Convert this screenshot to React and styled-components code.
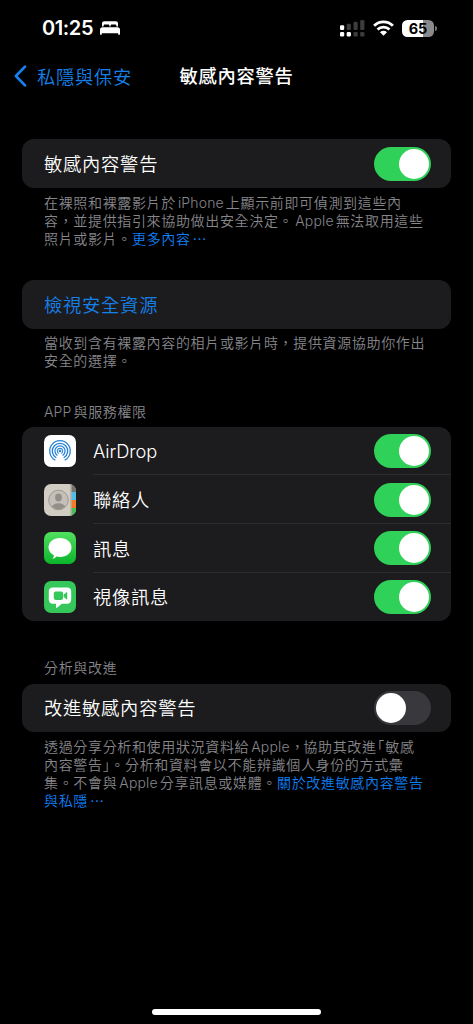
import React, { useState } from 'react'
import styled, { createGlobalStyle } from 'styled-components';


function StatusBar() {
    return (
        <Status>
            <Clock>
                01:25
                <svg width="20" height="14" viewBox="0 0 20 14" fill="#fff">
                    <path d="M2 5.4V2.6C2 1 2.9.2 4.4.2h11.2C17.1.2 18 1 18 2.6v2.8h-1.6v-.6c0-.9-.5-1.4-1.4-1.4h-3c-.9 0-1.4.5-1.4 1.4v.6H9.4v-.6c0-.9-.5-1.4-1.4-1.4H5c-.9 0-1.4.5-1.4 1.4v.6z" />
                    <path d="M0 9c0-1.7.9-2.7 2.5-2.7h15C19.1 6.3 20 7.3 20 9v4.2c0 .4-.2.6-.6.6h-.6c-.4 0-.6-.2-.6-.6v-1H1.8v1c0 .4-.2.6-.6.6H.6c-.4 0-.6-.2-.6-.6z" />
                </svg>
            </Clock>
            <Indicators>
                <svg width="25" height="17" viewBox="0 0 25 17">
                    <g fill="#fff">
                        <rect x="0" y="5.3" width="4.2" height="4.7" rx="1.2" />
                        <rect x="0" y="12" width="4.2" height="4.5" rx="1.2" />
                        <rect x="6.7" y="12" width="4.2" height="4.5" rx="1.2" />
                    </g>
                    <g fill="#3c3c3e">
                        <rect x="6.7" y="3.7" width="4.2" height="6.3" rx="1.2" />
                        <rect x="13.5" y="1.7" width="4.2" height="8.3" rx="1.2" />
                        <rect x="20.2" y="0" width="4.2" height="10" rx="1.2" />
                        <rect x="13.5" y="12" width="4.2" height="4.5" rx="1.2" />
                        <rect x="20.2" y="12" width="4.2" height="4.5" rx="1.2" />
                    </g>
                </svg>
                <svg width="21" height="16" viewBox="0 0 21 16" fill="none" stroke="#fff" strokeWidth="2.8">
                    <path d="M1.1 5.7a13.4 13.4 0 0 1 18.8 0" />
                    <path d="M4.5 9.5a8.6 8.6 0 0 1 12 0" />
                    <path d="M10.5 15.7 7 12.2a4.9 4.9 0 0 1 7 0z" fill="#fff" stroke="none" />
                </svg>
                <Battery>
                    <Charge>65</Charge>
                    <Cap />
                </Battery>
            </Indicators>
        </Status>
    )
}

function Switch({ on, label, onClick }) {
    return (
        <Track $on={on} role="switch" aria-checked={on} aria-label={label} onClick={onClick}>
            <Knob />
        </Track>
    )
}

function SwitchRow({ label, icon, initial, latin }) {
    const [on, setOn] = useState(initial)

    return (
        <Row>
            {icon}
            <RowBody $inset={!!icon}>
                <Label $latin={latin}>{label}</Label>
                <Switch on={on} label={label} onClick={() => setOn(!on)} />
            </RowBody>
        </Row>
    )
}

function AirDropIcon() {
    return (
        <AppIcon viewBox="0 0 32 32">
            <rect width="32" height="32" rx="7" fill="#fff" />
            <g fill="none" stroke="#2583d8" strokeWidth="1.3" strokeLinecap="round">
                <path d="M10.8 24.9a10.3 10.3 0 1 1 10.4 0" />
                <path d="M11.9 22.5a7.7 7.7 0 1 1 8.2 0" />
                <path d="M13 20.1a5.1 5.1 0 1 1 6 0" />
            </g>
            <path fill="none" stroke="#2583d8" strokeWidth="1.1" strokeLinecap="round" d="M14.4 18.2a2.7 2.7 0 1 1 3.2 0" />
            <circle cx="16" cy="16" r="1.3" fill="#2583d8" />
        </AppIcon>
    )
}

function ContactsIcon() {
    return (
        <AppIcon viewBox="0 0 32 32">
            <clipPath id="book"><rect width="32" height="32" rx="7" /></clipPath>
            <clipPath id="face"><circle cx="14.5" cy="16" r="9.3" /></clipPath>
            <g clipPath="url(#book)">
                <rect width="32" height="32" fill="#d2cdc3" />
                <rect x="26.4" width="1.2" height="32" fill="#a9a59d" />
                <rect x="27.6" width="4.4" height="8" fill="#77736d" />
                <rect x="27.6" y="8" width="4.4" height="8" fill="#55b9e9" />
                <rect x="27.6" y="16" width="4.4" height="8" fill="#f47d24" />
                <rect x="27.6" y="24" width="4.4" height="8" fill="#4bbd58" />
                <circle cx="14.5" cy="16" r="9.8" fill="#c5c0b7" stroke="#9c9892" strokeWidth="1" />
                <g clipPath="url(#face)" fill="#928e88">
                    <ellipse cx="14.5" cy="13.4" rx="3.4" ry="4" />
                    <ellipse cx="14.5" cy="24" rx="7" ry="4.7" />
                </g>
            </g>
        </AppIcon>
    )
}

function MessagesIcon() {
    return (
        <AppIcon viewBox="0 0 32 32">
            <linearGradient id="green" x1="0" y1="0" x2="0" y2="1">
                <stop offset="0" stopColor="#52df60" />
                <stop offset="1" stopColor="#0bb52b" />
            </linearGradient>
            <rect width="32" height="32" rx="7" fill="url(#green)" />
            <path
                fill="#fff"
                d="M16 6c6.5 0 11.5 4.1 11.5 9.5S22.5 25 16 25c-1.2 0-2.3-.1-3.4-.4-1 1-2.6 2.1-4.2 2.3 1-1 1.5-2.5 1.5-3.6-3.3-1.7-5.4-4.5-5.4-7.8C4.5 10.1 9.5 6 16 6z"
            />
        </AppIcon>
    )
}

function VideoMessageIcon() {
    return (
        <AppIcon viewBox="0 0 32 32">
            <rect width="32" height="32" rx="7" fill="#35c759" />
            <path
                fill="#fff"
                d="M8.7 6.4h14.6c2.4 0 3.9 1.5 3.9 3.9v8.5c0 2.4-1.5 3.9-3.9 3.9h-5.5l-4.5 3.9c-.7.6-1.3.4-1.3-.5v-3.4H8.7c-2.4 0-3.9-1.5-3.9-3.9v-8.5c0-2.4 1.5-3.9 3.9-3.9z"
            />
            <rect x="9.8" y="10.6" width="9.3" height="8.3" rx="1.8" fill="#35c759" />
            <path fill="#35c759" d="m19.6 13.8 2.8-2.5c.4-.3.8-.2.8.3v6.4c0 .5-.4.6-.8.3l-2.8-2.5z" />
        </AppIcon>
    )
}


function App() {
    return (
        <Screen>
            <GlobalStyle />
            <StatusBar />

            <NavBar>
                <Back>
                    <svg width="13" height="22" viewBox="0 0 13 22" fill="none" stroke="#1483f5" strokeWidth="2.6" strokeLinecap="round" strokeLinejoin="round">
                        <path d="M11 1.6 1.9 11l9.1 9.4" />
                    </svg>
                    <Label $link>私隱與保安</Label>
                </Back>
                <Title>敏感內容警告</Title>
                <span />
            </NavBar>

            <Section $gap={42.9}>
                <Card>
                    <SwitchRow label="敏感內容警告" initial={true} />
                </Card>
                <Note>
                    <Line>在裸照和裸露影片於<Latin>iPhone</Latin>上顯示前即可偵測到這些內</Line>
                    <Line>容，並提供指引來協助做出安全決定。<Latin>Apple</Latin>無法取用這些</Line>
                    <Line>照片或影片。<More>更多內容<Dots>⋯</Dots></More></Line>
                </Note>
            </Section>

            <Section $gap={32.5}>
                <Card>
                    <Row>
                        <RowBody><Label $link>檢視安全資源</Label></RowBody>
                    </Row>
                </Card>
                <Note>
                    <Line>當收到含有裸露內容的相片或影片時，提供資源協助你作出</Line>
                    <Line>安全的選擇。</Line>
                </Note>
            </Section>

            <Section $gap={32.1}>
                <Heading><Latin $start>APP</Latin>與服務權限</Heading>
                <Card>
                    <SwitchRow icon={<AirDropIcon />} label="AirDrop" initial={true} latin />
                    <SwitchRow icon={<ContactsIcon />} label="聯絡人" initial={true} />
                    <SwitchRow icon={<MessagesIcon />} label="訊息" initial={true} />
                    <SwitchRow icon={<VideoMessageIcon />} label="視像訊息" initial={true} />
                </Card>
            </Section>

            <Section $gap={38}>
                <Heading>分析與改進</Heading>
                <Card>
                    <SwitchRow label="改進敏感內容警告" initial={false} />
                </Card>
                <Note>
                    <Line>透過分享分析和使用狀況資料給<Latin>Apple</Latin><Half $space={2}>，</Half>協助其改進<Half $space={0.5}>「</Half>敏感</Line>
                    <Line>內容警告<Half>」</Half>。分析和資料會以不能辨識個人身份的方式彙</Line>
                    <Line>集。不會與<Latin>Apple</Latin>分享訊息或媒體。<More>關於改進敏感內容警告</More></Line>
                    <Line><More>與私隱<Dots>⋯</Dots></More></Line>
                </Note>
            </Section>

            <HomeBar />
        </Screen>
    )
}




export default App

const GlobalStyle = createGlobalStyle`

body{
margin: 0;
background: #000;
}

`

const Screen = styled.div`

box-sizing: border-box;
display: flex;
flex-direction: column;
width: 473px;
height: 1024px;
padding-bottom: 9px;
overflow: hidden;
background: #000;
color: #fff;
font-family: Inter, "Noto Sans CJK TC", sans-serif;
font-weight: 350;

`

const Status = styled.div`

display: flex;
justify-content: space-between;
align-items: center;
height: 56px;
padding: 0 36px 0 42px;

`

const Clock = styled.div`

display: flex;
align-items: center;
gap: 7px;
font-size: 20px;
font-weight: 600;
letter-spacing: -0.4px;

`

const Indicators = styled.div`

display: flex;
align-items: center;
gap: 8px;

`

const Battery = styled.div`

display: flex;
align-items: center;
gap: 1px;

`

const Charge = styled.div`

width: 32px;
height: 17px;
border-radius: 5.5px;
background: linear-gradient(90deg, #fff 65%, #8a8a8c 65%);
color: #000;
font-size: 14.5px;
font-weight: 700;
line-height: 17px;
text-align: center;

`

const Cap = styled.div`

width: 2px;
height: 5px;
border-radius: 0 2px 2px 0;
background: #77777a;

`

const NavBar = styled.div`

display: grid;
grid-template-columns: 1fr auto 1fr;
align-items: center;
height: 40.5px;
padding: 0 14px;

`

const Back = styled.div`

display: flex;
align-items: center;
gap: 10px;

`

const Title = styled.div`

padding-bottom: 2px;
font-size: 18.3px;
font-weight: 500;
letter-spacing: 0.75px;

`

const Section = styled.div`

margin: ${props => props.$gap}px 22px 0;

`

const Heading = styled.div`

padding: 0 22px;
height: 24.3px;
color: #86868b;
font-size: 14px;
line-height: 18px;
letter-spacing: 0.66px;
white-space: nowrap;

`

const Card = styled.div`

border-radius: 12px;
overflow: hidden;
background: #1c1c1e;

`

const Row = styled.div`

display: flex;
align-items: center;
height: 48.6px;
padding-left: 22px;

`

const AppIcon = styled.svg`

flex: none;
width: 32px;
height: 32px;
margin-right: 17px;

`

const RowBody = styled.div`

display: flex;
flex: 1;
justify-content: space-between;
align-items: center;
height: 100%;
padding-right: 20px;
box-shadow: ${props => props.$inset ? 'inset 0 -1px #2d2d30' : 'none'};

${Row}:last-child > &{
box-shadow: none;
}

`

const Label = styled.span`

padding-bottom: ${props => props.$latin ? 0 : 1}px;
color: ${props => props.$link ? '#1680ea' : '#fff'};
font-size: 18.3px;
letter-spacing: ${props => props.$latin ? -0.05 : 0.75}px;

`

const Track = styled.button`

box-sizing: border-box;
display: flex;
justify-content: ${props => props.$on ? 'flex-end' : 'flex-start'};
align-items: center;
width: 57px;
height: 34px;
padding: 2px;
border: none;
border-radius: 17px;
background: ${props => props.$on ? '#30d158' : '#39393d'};

`

const Knob = styled.span`

width: 30px;
height: 30px;
border-radius: 50%;
background: #fff;

`

const Note = styled.div`

padding: 5.7px 22px 0;
color: #86868b;
font-size: 14px;
letter-spacing: 0.66px;

`

const Line = styled.div`

height: 18px;
line-height: 18px;
white-space: nowrap;

`

const Latin = styled.span`

margin: 0 2px 0 ${props => props.$start ? 0 : 2}px;
letter-spacing: 0.15px;

`

// half-width form of full-width punctuation
const Half = styled.span`

margin: 0 ${props => props.$space || 0}px;
font-feature-settings: "halt";

`

const More = styled.span`

color: #0f7ff2;

`

const Dots = styled.span`

margin-left: 2px;

`

const HomeBar = styled.div`

width: 169px;
height: 6px;
margin: auto auto 0;
border-radius: 3px;
background: #fff;

`
